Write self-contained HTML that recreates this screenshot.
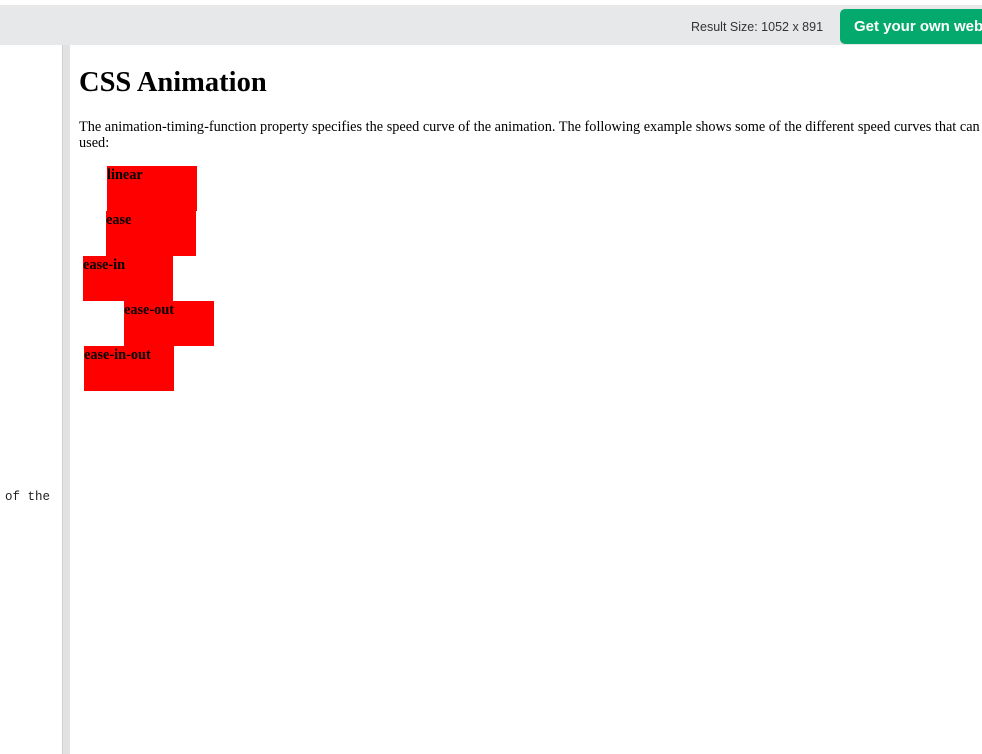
<!DOCTYPE html>
<html><head><style>
html,body{margin:0;width:982px;height:754px;overflow:hidden}
body{background:#fff;position:relative;font-family:"Liberation Serif",serif}
.bar{position:absolute;top:5px;left:0;width:982px;height:40px;background:#e7e8e9}
.rs{position:absolute;left:691px;top:20px;font:12.5px "Liberation Sans",sans-serif;color:#333}
.btn{position:absolute;left:840px;top:9px;width:142px;height:35px;background:#04aa6d;border-radius:5px 0 0 5px;color:#fff;font:bold 15px "Liberation Sans",sans-serif;line-height:35px;padding-left:14px;box-sizing:border-box;white-space:nowrap;overflow:hidden}
.div{position:absolute;left:62px;top:45px;width:8px;height:709px;background:#e2e2e2;border-left:1px solid #cfcfcf;box-sizing:border-box}
.code{position:absolute;left:5px;top:490px;font:12.5px "Liberation Mono",monospace;color:#222}
h1{position:absolute;left:79px;top:67px;margin:0;font-size:28.5px;font-weight:bold;white-space:nowrap}
p{position:absolute;left:79px;top:119px;margin:0;font-size:14.3px;line-height:16px;width:920px;white-space:nowrap}
.b{position:absolute;width:90px;height:45px;background:red;font-weight:bold;font-size:14.3px;line-height:18px}
</style></head><body>
<div class="bar"></div>
<div class="rs">Result Size: 1052 x 891</div>
<div class="btn">Get your own website</div>
<div class="div"></div>
<div class="code">of the</div>
<h1>CSS Animation</h1>
<p>The animation-timing-function property specifies the speed curve of the animation. The following example shows some of the different speed curves that can be<br>used:</p>
<div class="b" style="left:107px;top:166px">linear</div>
<div class="b" style="left:106px;top:211px">ease</div>
<div class="b" style="left:83px;top:256px">ease-in</div>
<div class="b" style="left:124px;top:301px">ease-out</div>
<div class="b" style="left:84px;top:346px">ease-in-out</div>
</body></html>
